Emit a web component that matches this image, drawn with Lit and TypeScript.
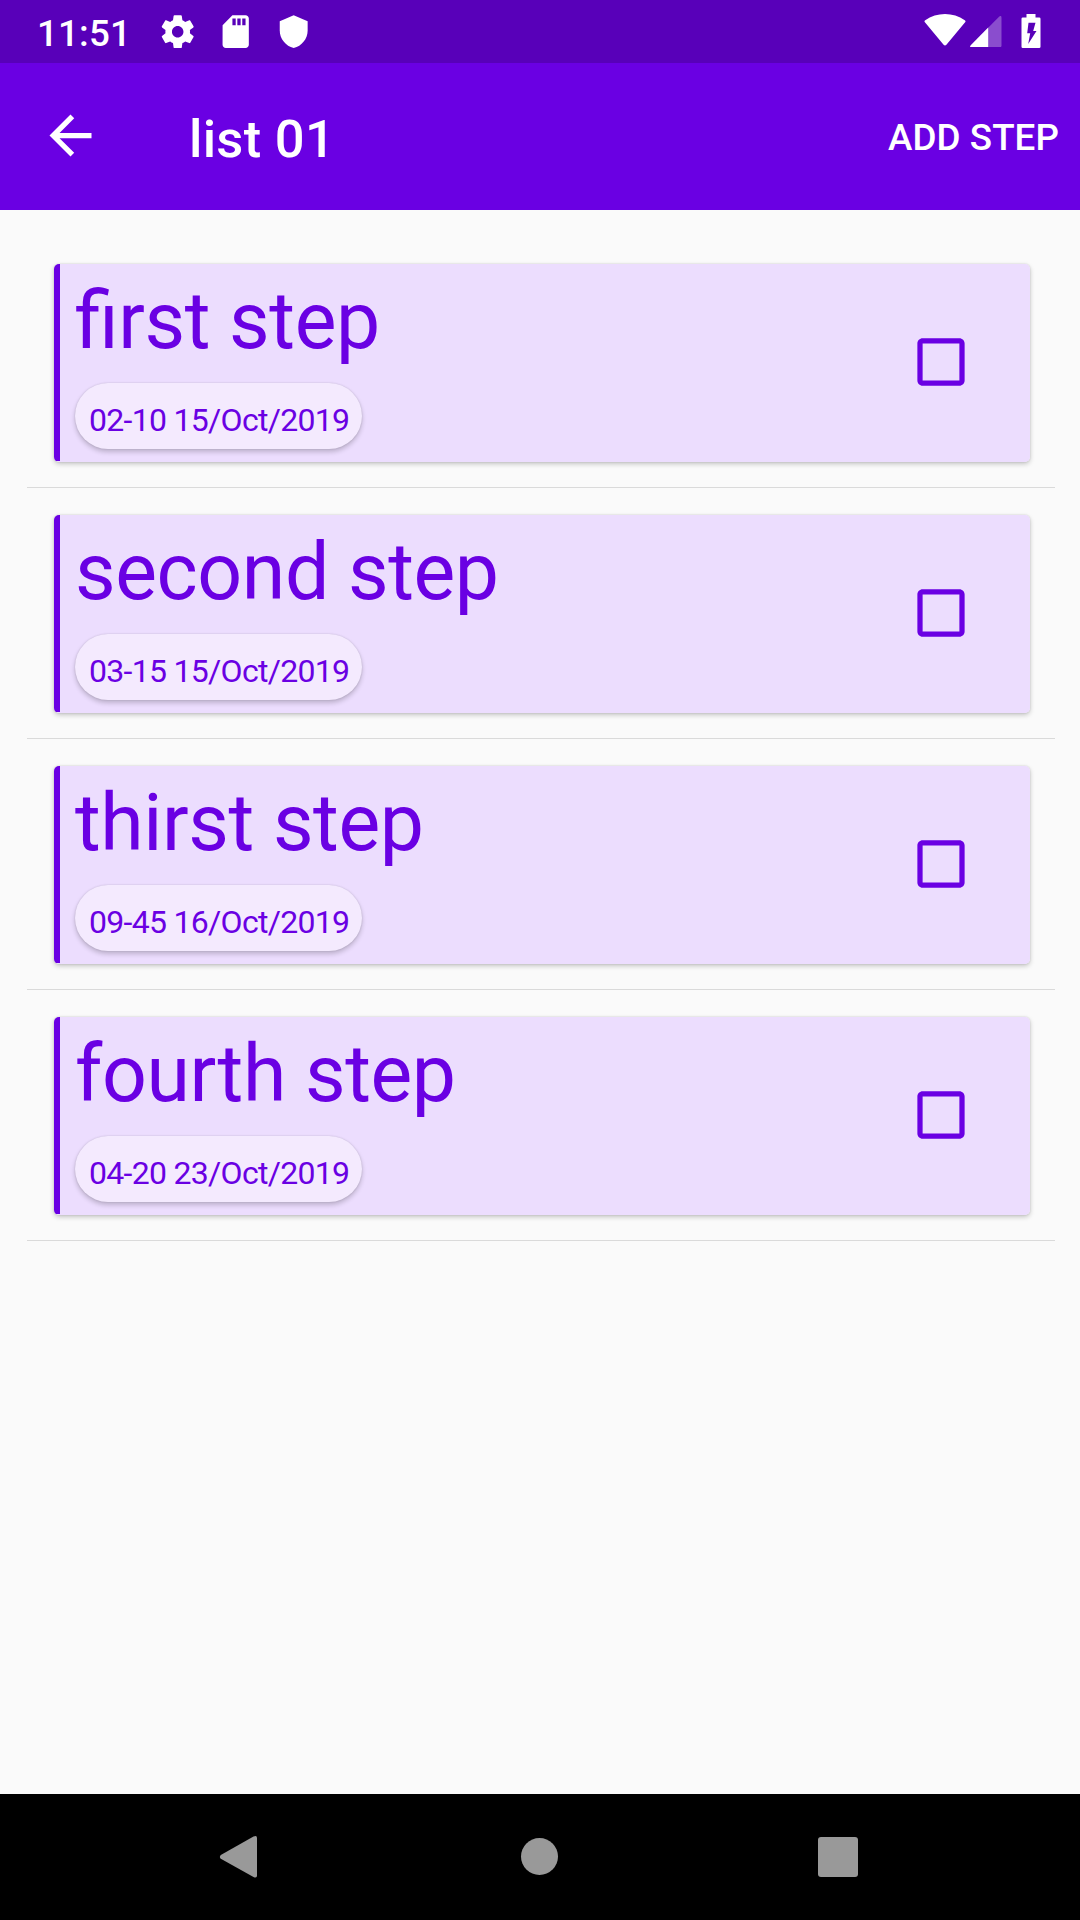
import { LitElement, html, css, svg } from "lit";
import { customElement, property } from "lit/decorators.js";

interface Step {
  title: string;
  due: string;
}

const STEPS: Step[] = [
  { title: "first step", due: "02-10 15/Oct/2019" },
  { title: "second step", due: "03-15 15/Oct/2019" },
  { title: "thirst step", due: "09-45 16/Oct/2019" },
  { title: "fourth step", due: "04-20 23/Oct/2019" },
];

@customElement("status-bar")
class StatusBar extends LitElement {
  static styles = css`
    :host {
      display: flex;
      align-items: flex-start;
      justify-content: space-between;
      box-sizing: border-box;
      height: 63px;
      padding: 0 32px 0 37px;
      background: #5800b9;
      color: #fff;
    }
    .group {
      display: flex;
      align-items: flex-start;
    }
    .clock {
      width: 89px;
      margin: 12px 32.3px 0 0;
      font-size: 36.75px;
      font-weight: 500;
      letter-spacing: 0.15px;
      line-height: 43px;
      white-space: nowrap;
    }
    svg {
      display: block;
      fill: #fff;
    }
    .system {
      width: 39.4px;
      height: 39.4px;
      margin: 11.7px 18.5px 0 0;
    }
    .wifi {
      width: 42px;
      height: 33px;
      margin: 14px 4.5px 0 0;
    }
    .signal {
      width: 31.5px;
      height: 31.5px;
      margin: 15.5px 19.5px 0 0;
    }
    .battery {
      width: 20px;
      height: 35px;
      margin: 14px 7px 0 0;
    }
  `;

  render() {
    return html`
      <div class="group">
        <span class="clock">11:51</span>
        <svg class="system" viewBox="0 0 24 24">
          <path d="M19.43 12.98c.04-.32.07-.64.07-.98s-.03-.66-.07-.98l2.11-1.65c.19-.15.24-.42.12-.64l-2-3.46c-.12-.22-.39-.3-.61-.22l-2.49 1c-.52-.4-1.08-.73-1.69-.98l-.38-2.65C14.46 2.18 14.25 2 14 2h-4c-.25 0-.46.18-.49.42l-.38 2.65c-.61.25-1.17.59-1.69.98l-2.49-1c-.23-.09-.49 0-.61.22l-2 3.46c-.13.22-.07.49.12.64l2.11 1.65c-.04.32-.07.65-.07.98s.03.66.07.98l-2.11 1.65c-.19.15-.24.42-.12.64l2 3.46c.12.22.39.3.61.22l2.49-1c.52.4 1.08.73 1.69.98l.38 2.65c.03.24.24.42.49.42h4c.25 0 .46-.18.49-.42l.38-2.65c.61-.25 1.17-.59 1.69-.98l2.49 1c.23.09.49 0 .61-.22l2-3.46c.12-.22.07-.49-.12-.64l-2.11-1.65zM12 15.5c-1.93 0-3.5-1.57-3.5-3.5s1.57-3.5 3.5-3.5 3.5 1.57 3.5 3.5-1.57 3.5-3.5 3.5z"/>
        </svg>
        <svg class="system" viewBox="0 0 24 24">
          <path d="M18 2h-8L4.02 8 4 20c0 1.100.9 2 2 2h12c1.100 0 2-.9 2-2V4c0-1.100-.9-2-2-2zm-6 6h-2V4h2v4zm3 0h-2V4h2v4zm3 0h-2V4h2v4z"/>
        </svg>
        <svg class="system" viewBox="0 0 24 24">
          <path d="M12 2L3.500 5.700v5.600c0 5 3.600 9.500 8.500 10.700 4.900-1.200 8.500-5.700 8.500-10.700V5.700z"/>
        </svg>
      </div>
      <div class="group">
        <svg class="wifi" viewBox="0 0 42 33">
          <path d="M1.100 8.500Q-.2 7.400 1.200 6.300C7 2 14 0 21 0s14 2 19.800 6.300q1.400 1.100.1 2.200L22.400 30.800q-1.400 1.500-2.800 0z"/>
        </svg>
        <svg class="signal" viewBox="0 0 32 32">
          <path opacity=".3" d="M29.500.7Q32-1.200 32 1.800V30q0 2-2 2H2q-3 0-1.200-2.300z"/>
          <path d="M18.500 11.800V32H2q-3 0-1.200-2.300z"/>
        </svg>
        <svg class="battery" viewBox="0 0 20 35">
          <path fill-rule="evenodd" d="M5.500 0h9v3.500h3.700q1.300 0 1.300 1.300v28q0 1.300-1.300 1.300H1.800q-1.300 0-1.300-1.300v-28q0-1.300 1.300-1.300h3.700zM7.500 8.700L6.200 19.300h3L7.200 30l8.300-13h-3.300L14.500 8.700z"/>
        </svg>
      </div>
    `;
  }
}

@customElement("app-bar")
class AppBar extends LitElement {
  @property() heading = "";
  @property() action = "";

  static styles = css`
    :host {
      display: flex;
      align-items: center;
      box-sizing: border-box;
      height: 147px;
      padding: 0 21px 0 39px;
      background: #6a00e3;
      color: #fff;
      font-weight: 500;
    }
    .back {
      width: 63px;
      height: 63px;
      margin: -2px 87px 0 0;
      fill: #fff;
    }
    .heading {
      flex: 1;
      margin: 4px 0 0;
      font-size: 52.5px;
      font-weight: 500;
      letter-spacing: 0.3px;
      line-height: 62px;
    }
    .action {
      margin-top: 2px;
      font-size: 36.75px;
      letter-spacing: 0.08px;
      line-height: 43px;
      text-transform: uppercase;
    }
  `;

  render() {
    return html`
      <svg class="back" viewBox="0 0 24 24">
        <path d="M20 11H7.830l5.590-5.590L12 4l-8 8 8 8 1.410-1.410L7.830 13H20v-2z"/>
      </svg>
      <h1 class="heading">${this.heading}</h1>
      <span class="action">${this.action}</span>
    `;
  }
}

@customElement("step-card")
class StepCard extends LitElement {
  @property({ attribute: false }) step!: Step;

  static styles = css`
    :host {
      display: block;
      box-sizing: border-box;
      height: 251px;
      padding: 27px 25px 0 27px;
      border-bottom: 1px solid #dadada;
    }
    .card {
      display: flex;
      align-items: center;
      justify-content: space-between;
      box-sizing: border-box;
      height: 198px;
      padding: 0 57px 0 0;
      border-radius: 5px;
      overflow: hidden;
      background: linear-gradient(#6a00e3, #6a00e3) 0 0 / 6px 197px no-repeat #ecddfe;
    }
    .shadow {
      border-radius: 5px;
      box-shadow: 0 2px 5px rgba(0, 0, 0, 0.22), 0 0 2px rgba(0, 0, 0, 0.14);
    }
    .text {
      display: flex;
      flex-direction: column;
      align-items: flex-start;
      align-self: flex-start;
      padding: 11px 0 0 21px;
      color: #6a00e3;
    }
    .title {
      font-size: 78.75px;
      font-feature-settings: "liga" 1;
      letter-spacing: -0.43px;
      line-height: 93px;
      white-space: nowrap;
    }
    .due {
      box-sizing: border-box;
      width: 287px;
      height: 66px;
      margin-top: 15px;
      padding: 18px 0 0 14px;
      border-radius: 33px;
      background: #f4eafe;
      box-shadow: 0 3px 5px rgba(0, 0, 0, 0.2), 0 0 2px rgba(0, 0, 0, 0.14);
      font-size: 32px;
      letter-spacing: -0.7px;
      line-height: 38px;
      white-space: nowrap;
    }
    .check {
      width: 64px;
      height: 64px;
      margin-bottom: 2px;
      fill: #6a00e3;
    }
  `;

  render() {
    return html`
      <div class="shadow">
        <div class="card">
          <div class="text">
            <span class="title">${this.step.title}</span>
            <span class="due">${this.step.due}</span>
          </div>
          <svg class="check" viewBox="-.19 -.19 24.38 24.38" role="checkbox" aria-checked="false">
            <path d="M19 5v14H5V5h14m0-2H5c-1.100 0-2 .9-2 2v14c0 1.100.9 2 2 2h14c1.100 0 2-.9 2-2V5c0-1.100-.9-2-2-2z"/>
          </svg>
        </div>
      </div>
    `;
  }
}

@customElement("nav-bar")
class NavBar extends LitElement {
  static styles = css`
    :host {
      display: flex;
      align-items: center;
      justify-content: space-between;
      box-sizing: border-box;
      height: 126px;
      padding: 0 221px 0 219px;
      background: #000;
    }
    svg {
      width: 42px;
      height: 44px;
      fill: #999;
    }
  `;

  private icon(shape: unknown) {
    return html`<svg viewBox="0 0 42 44">${shape}</svg>`;
  }

  render() {
    return html`
      ${this.icon(svg`<path d="M1.800 20Q0 22 1.800 23.800L34.500 42Q38 43.500 38 40.500V3Q38-.2 34.500 1.500z"/>`)}
      ${this.icon(svg`<circle cx="21.500" cy="21.500" r="18.500"/>`)}
      ${this.icon(svg`<rect x="1" y="2" width="40" height="40" rx="3"/>`)}
    `;
  }
}

@customElement("app-root")
class AppRoot extends LitElement {
  static styles = css`
    :host {
      display: flex;
      flex-direction: column;
      width: 1080px;
      height: 1920px;
      overflow: hidden;
      background: #fafafa;
      font-family: Roboto, sans-serif;
    }
    .list {
      flex: 1;
      padding: 27px 25px 0 27px;
    }
  `;

  render() {
    return html`
      <status-bar></status-bar>
      <app-bar heading="list 01" action="Add step"></app-bar>
      <main class="list">
        ${STEPS.map((step) => html`<step-card .step=${step}></step-card>`)}
      </main>
      <nav-bar></nav-bar>
    `;
  }
}
